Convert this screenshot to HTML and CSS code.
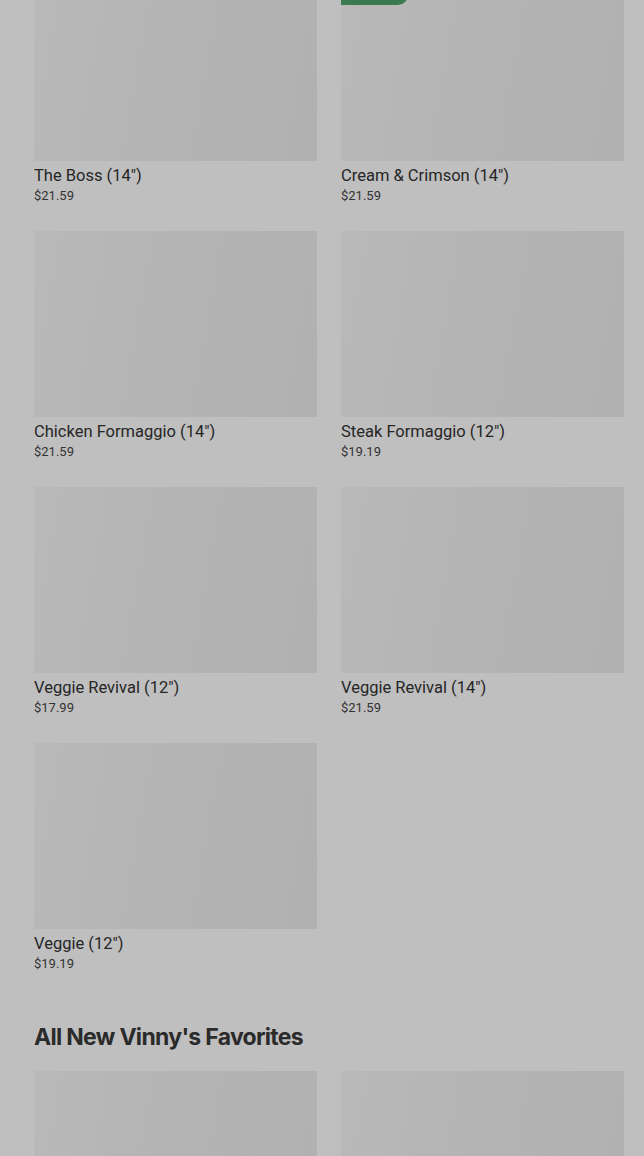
FILE: index.html
```html
<!DOCTYPE html>
<html lang="en">
<head>
    <meta charset="UTF-8">
    <meta name="viewport" content="width=device-width, initial-scale=1.0">
    <title>Menu</title>
    <link rel="stylesheet" href="styles.css">
</head>
<body>
    <div class="menu">
        <section class="category category-scrolled">
            <div class="item-grid">
                <div class="item">
                    <div class="item-photo"></div>
                    <p class="item-name">The Boss (14")</p>
                    <p class="item-price">$21.59</p>
                </div>
                <div class="item">
                    <div class="item-photo">
                        <span class="badge"></span>
                    </div>
                    <p class="item-name">Cream &amp; Crimson (14")</p>
                    <p class="item-price">$21.59</p>
                </div>
                <div class="item">
                    <div class="item-photo"></div>
                    <p class="item-name">Chicken Formaggio (14")</p>
                    <p class="item-price">$21.59</p>
                </div>
                <div class="item">
                    <div class="item-photo"></div>
                    <p class="item-name">Steak Formaggio (12")</p>
                    <p class="item-price">$19.19</p>
                </div>
                <div class="item">
                    <div class="item-photo"></div>
                    <p class="item-name">Veggie Revival (12")</p>
                    <p class="item-price">$17.99</p>
                </div>
                <div class="item">
                    <div class="item-photo"></div>
                    <p class="item-name">Veggie Revival (14")</p>
                    <p class="item-price">$21.59</p>
                </div>
                <div class="item">
                    <div class="item-photo"></div>
                    <p class="item-name">Veggie (12")</p>
                    <p class="item-price">$19.19</p>
                </div>
            </div>
        </section>

        <section class="category">
            <h2 class="category-title">All New Vinny's Favorites</h2>
            <div class="item-grid">
                <div class="item">
                    <div class="item-photo"></div>
                </div>
                <div class="item">
                    <div class="item-photo"></div>
                </div>
            </div>
        </section>
    </div>
</body>
</html>
```

FILE: styles.css
```css
body {
    margin: 0;
    padding: 0;
    background-color: #bfbfbf;
    font-family: Roboto, "Liberation Sans", sans-serif;
    color: #2e2e2e;
    overflow: hidden;
}
.menu {
    padding: 0 20px 0 34px;
}

/* list is scrolled, first row is partly above the top */
.category-scrolled {
    margin-top: -25px;
}
.category-title {
    margin: 50px 0 19px;
    font-family: Inter, Roboto, sans-serif;
    font-size: 23px;
    line-height: 30px;
    font-weight: 700;
    letter-spacing: -0.7px;
    color: #2b2b2b;
}
.item-grid {
    display: grid;
    grid-template-columns: 283px 283px;
    column-gap: 24px;
    row-gap: 27px;
}
.item-photo {
    position: relative;
    height: 186px;
    background: linear-gradient(100deg, #b9b9b9 0%, #b4b4b4 45%, #b1b1b1 100%);
}
.item-name {
    margin: 5px 0 2px;
    font-size: 16.5px;
    line-height: 20px;
    font-weight: 400;
    color: #262626;
}
.item-price {
    margin: 0;
    font-size: 13px;
    line-height: 16px;
    color: #333;
}

/* badge on the photo corner */
.badge {
    position: absolute;
    top: 0;
    left: 0;
    width: 67px;
    height: 30px;
    background-color: #3b7a51;
    border-bottom-right-radius: 10px;
}
```
